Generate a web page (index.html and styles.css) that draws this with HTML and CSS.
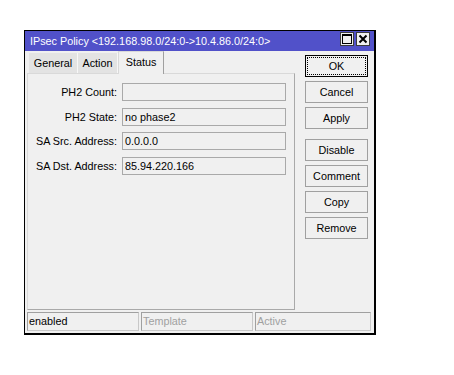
FILE: index.html
```html
<!DOCTYPE html>
<html lang="en">

<head>
  <meta charset="UTF-8">
  <meta name="viewport" content="width=device-width, initial-scale=1.0">
  <title>IPsec Policy</title>

  <link rel="stylesheet" href="styles.css">
</head>

<body>
  <div class="window">
    <div class="titlebar">
      <span class="title">IPsec Policy &lt;192.168.98.0/24:0-&gt;10.4.86.0/24:0&gt;</span>
      <div class="title-btns">
        <button type="button" class="tbtn" aria-label="Maximize">
          <svg width="12" height="12" viewBox="0 0 12 12">
            <rect x="1.5" y="1.5" width="9" height="9" fill="none" stroke="#000" stroke-width="1" />
            <rect x="1" y="1" width="10" height="2" fill="#000" />
          </svg>
        </button>
        <button type="button" class="tbtn" aria-label="Close">
          <svg width="12" height="12" viewBox="0 0 12 12">
            <path d="M2.5 2.5 L9.5 9.5 M9.5 2.5 L2.5 9.5" stroke="#000" stroke-width="2" />
          </svg>
        </button>
      </div>
    </div>

    <div class="content">
      <div class="main">
        <div class="left">
          <div class="tabs">
            <div class="tab general">General</div>
            <div class="tab action">Action</div>
            <div class="tab active">Status</div>
          </div>
          <div class="panel">
            <div class="form">
              <label class="label">PH2 Count:</label>
              <div class="field"></div>
              <label class="label">PH2 State:</label>
              <div class="field">no phase2</div>
              <label class="label">SA Src. Address:</label>
              <div class="field">0.0.0.0</div>
              <label class="label">SA Dst. Address:</label>
              <div class="field">85.94.220.166</div>
            </div>
          </div>
        </div>

        <div class="actions">
          <button type="button" class="btn default"><span>OK</span></button>
          <button type="button" class="btn">Cancel</button>
          <button type="button" class="btn">Apply</button>
          <button type="button" class="btn spaced">Disable</button>
          <button type="button" class="btn">Comment</button>
          <button type="button" class="btn">Copy</button>
          <button type="button" class="btn">Remove</button>
        </div>
      </div>

      <div class="statusbar">
        <div class="cell fixed">enabled</div>
        <div class="cell fixed muted">Template</div>
        <div class="cell grow muted">Active</div>
      </div>
    </div>
  </div>
</body>

</html>
```

FILE: styles.css
```css
body {
  margin: 0;
  background: #fff;
  font-family: "Liberation Sans", Arial, sans-serif;
  font-size: 10.8px;
  color: #000;
}

.window {
  box-sizing: border-box;
  width: 352px;
  height: 305px;
  margin: 30px 0 0 24px;
  border: 1px solid #000;
  border-right-width: 2px;
  border-bottom-width: 2px;
  background: #f0f0f0;
  display: flex;
  flex-direction: column;
}

.titlebar {
  height: 20px;
  flex-shrink: 0;
  background: #5151c9;
  color: #fff;
  display: flex;
  align-items: center;
  justify-content: space-between;
  padding: 0 4px 0 5px;
}

.title {
  white-space: nowrap;
}

.title-btns {
  display: flex;
  gap: 2px;
  align-self: flex-start;
  margin-top: 1px;
}

.tbtn {
  box-sizing: border-box;
  width: 14px;
  height: 14px;
  padding: 0;
  border: 1px solid #3c3c3c;
  background: #f0f0f0;
  display: flex;
  align-items: center;
  justify-content: center;
}

.content {
  flex: 1;
  display: flex;
  flex-direction: column;
  padding: 0 3px 2px 2px;
}

.main {
  flex: 1;
  display: flex;
  gap: 10px;
}

.left {
  width: 268px;
  display: flex;
  flex-direction: column;
}

.tabs {
  height: 22px;
  display: flex;
  align-items: flex-end;
  padding-left: 2px;
  position: relative;
  z-index: 1;
}

.tab {
  box-sizing: border-box;
  height: 20px;
  line-height: 20px;
  text-align: center;
  background: #e3e3e3;
  border-right: 1px solid #f7f7f7;
}

.tab.general {
  width: 49px;
}

.tab.action {
  width: 40px;
}

.tab.active {
  width: 46px;
  height: 23px;
  line-height: 20px;
  margin-bottom: -1px;
  background: #f0f0f0;
  border: 1px solid #d9d9d9;
  border-right-color: #a0a0a0;
  border-bottom: none;
}

.panel {
  box-sizing: border-box;
  height: 237px;
  border: 1px solid #a9a9a9;
  border-left-color: #d9d9d9;
  border-top-color: #d9d9d9;
  padding-top: 9px;
}

.form {
  display: grid;
  grid-template-columns: 89px 164px;
  column-gap: 5px;
  row-gap: 6.67px;
  align-items: center;
}

.label {
  text-align: right;
  white-space: nowrap;
}

.field {
  box-sizing: border-box;
  height: 18px;
  line-height: 16px;
  padding: 0 2px;
  border: 1px solid #a9a9a9;
  background: #f0f0f0;
}

.actions {
  display: flex;
  flex-direction: column;
  gap: 4px;
  padding-top: 4px;
}

.btn {
  box-sizing: border-box;
  width: 63px;
  height: 22px;
  padding: 0;
  border: 1px solid #a0a0a0;
  background: #f0f0f0;
  font-family: inherit;
  font-size: 10.8px;
  color: #000;
}

.btn.default {
  border-color: #000;
  padding: 1px;
}

.btn.default span {
  box-sizing: border-box;
  display: flex;
  align-items: center;
  justify-content: center;
  height: 100%;
  border: 1px dotted #000;
}

.btn.spaced {
  margin-top: 6px;
}

.statusbar {
  height: 19px;
  margin-top: 2px;
  display: flex;
  gap: 2px;
}

.cell {
  box-sizing: border-box;
  height: 19px;
  line-height: 17px;
  padding: 0 1px;
  border: 1px solid #c8c8c8;
  border-left-color: #a0a0a0;
  border-top-color: #a0a0a0;
}

.cell.fixed {
  width: 112px;
}

.cell.grow {
  flex: 1;
}

.cell.muted {
  color: #a0a0a0;
}
```
